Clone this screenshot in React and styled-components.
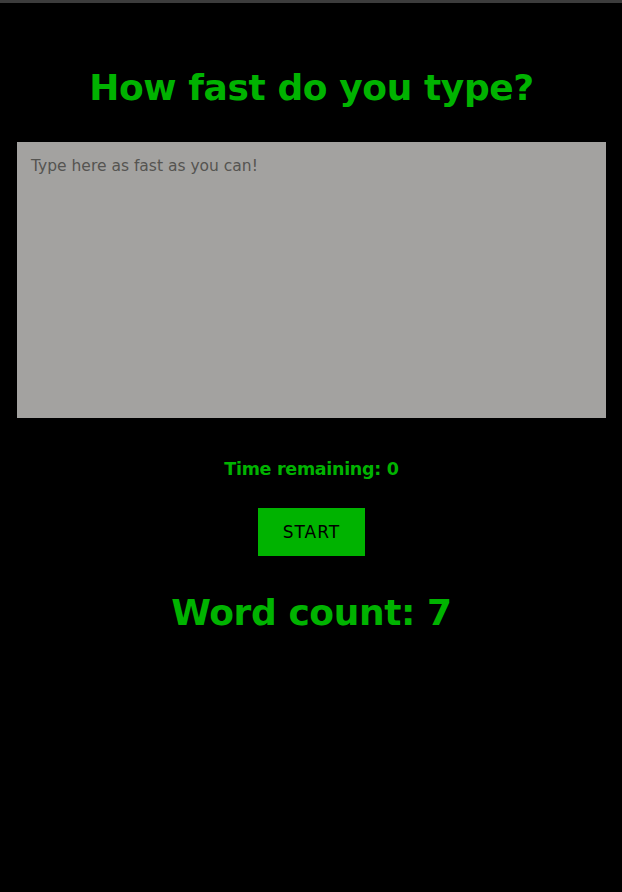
import React, { useState } from 'react'
import styled, { createGlobalStyle } from 'styled-components'

const GlobalStyle = createGlobalStyle`
  html, body {
    margin: 0;
    padding: 0;
    background: #000;
  }
  body {
    border-top: 3px solid #3c3c3c;
    min-height: 889px;
    font-family: "Comic Sans MS", "DejaVu Sans", sans-serif;
  }
`

const Page = styled.main`
  display: flex;
  flex-direction: column;
  align-items: center;
  padding: 61px 16px 0 17px;
`

const Heading = styled.h1`
  margin: ${p => p.$top || 0}px 0 ${p => p.$bottom || 0}px;
  font-size: 36px;
  line-height: 48px;
  letter-spacing: -0.4px;
  font-weight: 700;
  color: #00b300;
`

const TypingArea = styled.textarea`
  box-sizing: border-box;
  width: 100%;
  height: 276px;
  margin: 0;
  padding: 14px 14px;
  border: none;
  outline: none;
  resize: none;
  background: #a3a2a0;
  font-family: inherit;
  font-size: 15.5px;
  line-height: 20px;
  color: #333;

  &::placeholder {
    color: #555451;
  }
`

const Timer = styled.h4`
  margin: 39px 0 27px;
  font-size: 17.5px;
  line-height: 24px;
  letter-spacing: -0.3px;
  font-weight: 700;
  color: #00b300;
`

const StartButton = styled.button`
  width: 107px;
  height: 48px;
  border: none;
  background: #00b300;
  color: #000;
  font-family: inherit;
  font-size: 17px;
  letter-spacing: 1px;
  cursor: pointer;
`

export default function App() {
  const [text, setText] = useState('')
  return (
    <>
      <GlobalStyle />
      <Page>
        <Heading $bottom={30}>How fast do you type?</Heading>
        <TypingArea
          value={text}
          onChange={e => setText(e.target.value)}
          placeholder="Type here as fast as you can!"
        />
        <Timer>Time remaining: 0</Timer>
        <StartButton>START</StartButton>
        <Heading $top={33}>Word count: 7</Heading>
      </Page>
    </>
  )
}
